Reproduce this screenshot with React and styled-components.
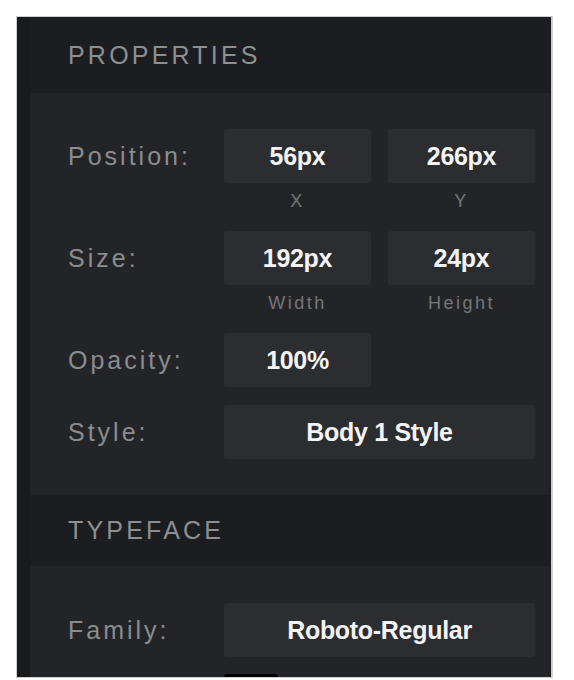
import styled, { createGlobalStyle } from "styled-components";

const GlobalStyle = createGlobalStyle`
  html, body {
    margin: 0;
    padding: 0;
    background: #ffffff;
  }
  body {
    font-family: "Liberation Sans", Arial, sans-serif;
  }
`;

const properties = [
  { label: "Position:", fields: [{ value: "56px", sub: "X" }, { value: "266px", sub: "Y" }] },
  { label: "Size:", fields: [{ value: "192px", sub: "Width" }, { value: "24px", sub: "Height" }] },
  { label: "Opacity:", fields: [{ value: "100%" }] },
  { label: "Style:", wide: true, fields: [{ value: "Body 1 Style" }] },
];

export default function App() {
  return (
    <>
      <GlobalStyle />
      <Panel>
        <Inner>
          <SectionHeader $height={76}>PROPERTIES</SectionHeader>
          <SectionBody $top={36} $bottom={36}>
            {properties.map((row) => (
              <Row key={row.label}>
                <Label>{row.label}</Label>
                {row.fields.map((f) => (
                  <Field key={f.value} $wide={row.wide}>
                    <ValueBox>{f.value}</ValueBox>
                    {f.sub && <SubLabel>{f.sub}</SubLabel>}
                  </Field>
                ))}
              </Row>
            ))}
          </SectionBody>
          <SectionHeader $height={71}>TYPEFACE</SectionHeader>
          <SectionBody $top={37} $bottom={0}>
            <Row>
              <Label>Family:</Label>
              <Field $wide>
                <ValueBox>Roboto-Regular</ValueBox>
              </Field>
            </Row>
            {/* next row is cut off by the panel edge, only its swatch top shows */}
            <Row $gap={17}>
              <Label />
              <Swatch />
            </Row>
          </SectionBody>
        </Inner>
      </Panel>
    </>
  );
}

const Panel = styled.div`
  box-sizing: border-box;
  margin: 16px 0 0 16px;
  width: 537px;
  height: 662px;
  border: 1px solid #cfcfcf;
  border-right-width: 2px;
  background: #191a1c;
  padding-left: 13px;
  overflow: hidden;
`;

const Inner = styled.div`
  display: flex;
  flex-direction: column;
  width: 520px;
`;

const SectionHeader = styled.div`
  box-sizing: border-box;
  height: ${(p) => p.$height}px;
  display: flex;
  align-items: center;
  padding-left: 38px;
  background: #1c1d20;
  color: #8e8f91;
  font-size: 25px;
  letter-spacing: 3.2px;
`;

const SectionBody = styled.div`
  display: flex;
  flex-direction: column;
  gap: 18px;
  padding: ${(p) => p.$top}px 15px ${(p) => p.$bottom}px 38px;
  background: #232427;
`;

const Row = styled.div`
  display: grid;
  grid-template-columns: 139px 147px 147px;
  column-gap: 17px;
  align-items: start;
  margin-top: ${(p) => (p.$gap ? p.$gap - 18 : 0)}px;
`;

const Label = styled.div`
  height: 54px;
  display: flex;
  align-items: center;
  color: #8b8c8e;
  font-size: 25px;
  letter-spacing: 3px;
  white-space: nowrap;
`;

const Field = styled.div`
  display: flex;
  flex-direction: column;
  grid-column: ${(p) => (p.$wide ? "2 / 4" : "auto")};
`;

const ValueBox = styled.div`
  height: 54px;
  display: flex;
  align-items: center;
  justify-content: center;
  background: #2c2d30;
  border-radius: 3px;
  color: #f4f4f4;
  font-size: 25px;
  font-weight: 700;
  letter-spacing: -0.3px;
`;

const SubLabel = styled.div`
  margin-top: 7px;
  height: 23px;
  line-height: 23px;
  text-align: center;
  color: #75767a;
  font-size: 18px;
  letter-spacing: 2.5px;
`;

const Swatch = styled.div`
  width: 54px;
  height: 54px;
  background: #000000;
  border-radius: 3px;
`;
